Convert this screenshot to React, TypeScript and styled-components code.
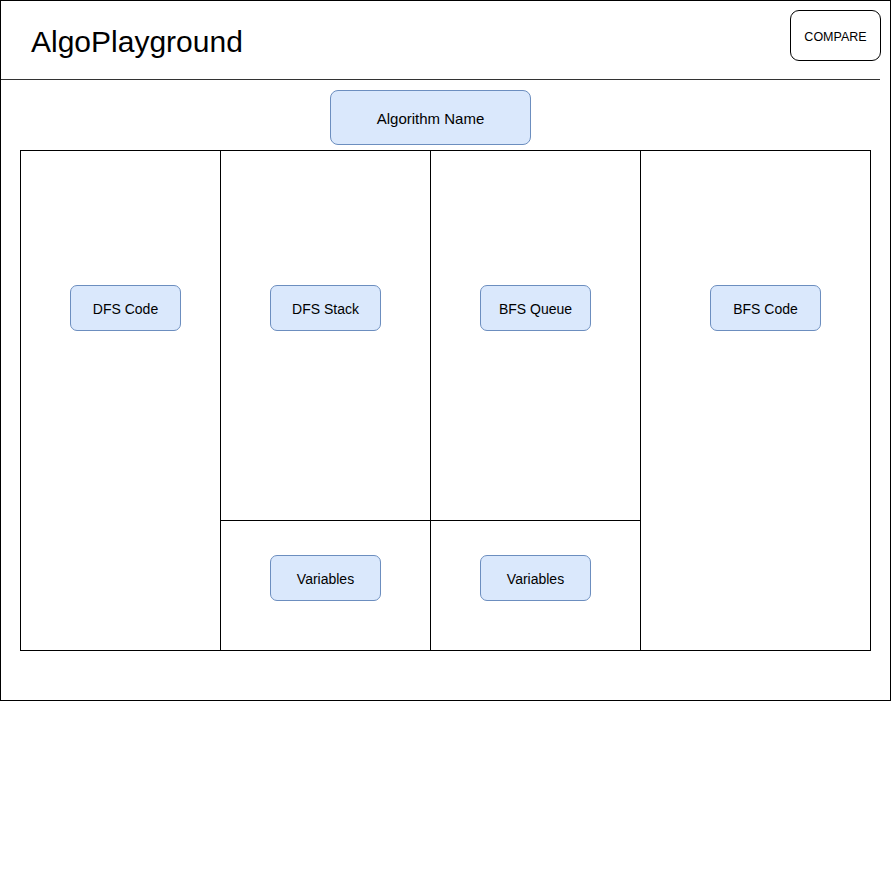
import React from 'react';
import styled, {createGlobalStyle} from 'styled-components';

const GlobalStyle = createGlobalStyle`
  html, body {
    margin: 0;
    padding: 0;
    background: #ffffff;
  }
  body {
    font-family: "Liberation Sans", Arial, Helvetica, sans-serif;
    color: #000000;
  }
`;

const Frame = styled.div`
  box-sizing: border-box;
  width: 891px;
  height: 701px;
  border: 1px solid #000000;
  display: flex;
  flex-direction: column;
`;

const Header = styled.header`
  display: flex;
  justify-content: space-between;
  align-items: flex-start;
  height: 78px;
  padding: 0 9px 0 30px;
`;

const Title = styled.h1`
  margin: 0;
  padding-top: 23px;
  font-size: 30px;
  line-height: 35px;
  font-weight: 400;
`;

const CompareButton = styled.button`
  box-sizing: border-box;
  margin-top: 9px;
  width: 91px;
  height: 51px;
  border: 1px solid #000000;
  border-radius: 9px;
  background: #ffffff;
  font-family: inherit;
  font-size: 12.5px;
  color: #000000;
  padding: 2px 0 0;
  cursor: pointer;
`;

const Divider = styled.hr`
  margin: 0;
  border: none;
  width: 879px;
  height: 1px;
  background: #333333;
`;

const Body = styled.main`
  display: flex;
  flex-direction: column;
  padding: 10px 0 0 19px;
`;

const Label = styled.div<{$w: number; $h: number; $size?: number}>`
  box-sizing: border-box;
  width: ${({$w}) => $w}px;
  height: ${({$h}) => $h}px;
  padding-top: 2px;
  border: 1px solid #6c8ebf;
  border-radius: ${({$h}) => ($h > 50 ? 8 : 7)}px;
  background: #dae8fc;
  display: flex;
  align-items: center;
  justify-content: center;
  font-size: ${({$size}) => $size ?? 14}px;
`;

const TitleBox = styled(Label)`
  margin-left: 310px;
  margin-bottom: 5px;
`;

const Board = styled.section`
  box-sizing: border-box;
  width: 851px;
  height: 501px;
  border: 1px solid #000000;
  display: grid;
  grid-template-columns: 200px 210px 210px 229px;
  grid-template-rows: 370px 129px;
  grid-template-areas:
    'dfsCode dfsStack bfsQueue bfsCode'
    'dfsCode dfsVars bfsVars bfsCode';
`;

const Cell = styled.div<{$area: string; $top: number; $left: number; $ruleRight?: boolean; $ruleBottom?: boolean}>`
  box-sizing: border-box;
  grid-area: ${({$area}) => $area};
  padding: ${({$top, $left}) => `${$top}px 0 0 ${$left}px`};
  border-right: ${({$ruleRight}) => ($ruleRight ? '1px solid #000000' : 'none')};
  border-bottom: ${({$ruleBottom}) => ($ruleBottom ? '1px solid #000000' : 'none')};
`;

const Box = ({children}: {children: React.ReactNode}) => (
  <Label $w={111} $h={46}>{children}</Label>
);

export default function App() {
  return (
    <>
      <GlobalStyle />
      <Frame>
        <Header>
          <Title>AlgoPlayground</Title>
          <CompareButton>COMPARE</CompareButton>
        </Header>
        <Divider />
        <Body>
          <TitleBox $w={201} $h={55} $size={15}>Algorithm Name</TitleBox>
          <Board>
            <Cell $area="dfsCode" $ruleRight $top={134} $left={49}>
              <Box>DFS Code</Box>
            </Cell>
            <Cell $area="dfsStack" $ruleRight $ruleBottom $top={134} $left={49}>
              <Box>DFS Stack</Box>
            </Cell>
            <Cell $area="bfsQueue" $ruleRight $ruleBottom $top={134} $left={49}>
              <Box>BFS Queue</Box>
            </Cell>
            <Cell $area="bfsCode" $top={134} $left={69}>
              <Box>BFS Code</Box>
            </Cell>
            <Cell $area="dfsVars" $ruleRight $top={34} $left={49}>
              <Box>Variables</Box>
            </Cell>
            <Cell $area="bfsVars" $ruleRight $top={34} $left={49}>
              <Box>Variables</Box>
            </Cell>
          </Board>
        </Body>
      </Frame>
    </>
  );
}
